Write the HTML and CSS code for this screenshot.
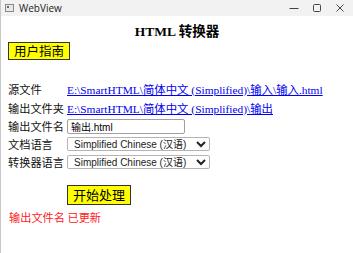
FILE: index.html
```html
<!DOCTYPE html>
<html lang="zh-CN">
<head>
  <meta charset="UTF-8">
  <meta name="viewport" content="width=device-width, initial-scale=1.0">
  <title>WebView</title>
  <link rel="stylesheet" href="styles.css">
</head>
<body>

  <div class="window">
    <!-- Title Bar -->
    <div class="titlebar">
      <span class="app-icon"><span></span></span>
      <span class="app-name">WebView</span>
      <span class="controls">
        <svg width="10" height="10" viewBox="0 0 10 10"><path d="M0.5 5.5h9" stroke="#444" stroke-width="1"/></svg>
        <svg width="10" height="10" viewBox="0 0 10 10"><rect x="1.5" y="1.5" width="7" height="7" rx="1" fill="none" stroke="#444" stroke-width="1"/></svg>
        <svg width="10" height="10" viewBox="0 0 10 10"><path d="M1.5 1.5l7 7M8.5 1.5l-7 7" stroke="#444" stroke-width="1"/></svg>
      </span>
    </div>

    <!-- Page -->
    <div class="page">
      <h1>HTML 转换器</h1>
      <button class="yellow-btn">用户指南</button>

      <div class="form-grid">
        <span class="label">源文件</span>
        <a class="path-link" href="#">E:\SmartHTML\简体中文 (Simplified)\输入\输入.html</a>

        <span class="label">输出文件夹</span>
        <a class="path-link" href="#">E:\SmartHTML\简体中文 (Simplified)\输出</a>

        <span class="label">输出文件名</span>
        <span><input type="text" class="name-input" value="输出.html"></span>

        <span class="label">文档语言</span>
        <span>
          <select class="lang-select">
            <option>Simplified Chinese (汉语)</option>
          </select>
        </span>

        <span class="label">转换器语言</span>
        <span>
          <select class="lang-select">
            <option>Simplified Chinese (汉语)</option>
          </select>
        </span>
      </div>

      <button class="yellow-btn start-btn">开始处理</button>

      <div class="status">输出文件名 已更新</div>
    </div>
  </div>

</body>
</html>
```

FILE: styles.css
```css
/* General Styles */
body {
  margin: 0;
  background-color: #fff;
}

.window {
  width: 353px;
  height: 253px;
  box-sizing: border-box;
  border-left: 1px solid #c8c8c8;
  overflow: hidden;
}

/* Title Bar */
.titlebar {
  height: 16px;
  background-color: #f2f2f2;
  display: flex;
  align-items: center;
  font-family: "Open Sans", "Noto Sans", sans-serif;
  font-size: 10px;
  color: #222;
}

.app-icon {
  width: 7px;
  height: 6px;
  margin-left: 4px;
  margin-right: 5px;
  border: 1px solid #8a8a8a;
  background-color: #e8e8e8;
  display: flex;
}

.app-icon span {
  width: 2px;
  height: 2px;
  margin: 1px;
  background-color: #3a7c8c;
}

.controls {
  margin-left: auto;
  margin-right: 8px;
  display: flex;
  gap: 13px;
}

.controls svg {
  display: block;
}

/* Page */
.page {
  padding: 0 7px;
}

h1 {
  margin: 8px 0 3px;
  text-align: center;
  font-family: "Liberation Serif", "Noto Sans CJK SC", serif;
  font-size: 13.5px;
  line-height: 15px;
  font-weight: bold;
}

.yellow-btn {
  display: block;
  height: 18px;
  padding: 0 5px;
  font-family: "Noto Sans CJK SC", sans-serif;
  font-size: 12.5px;
  line-height: 14px;
  background-color: #ffff00;
  border: 1px solid #333;
  color: #000;
}

.form-grid {
  margin-top: 19px;
  display: grid;
  grid-template-columns: 59px auto;
  grid-template-rows: 19px 19px 18px 18px 17px;
  align-items: center;
}

.label {
  font-family: "Noto Sans CJK SC", sans-serif;
  font-size: 11.2px;
  color: #111;
  white-space: nowrap;
}

.path-link {
  font-family: "Liberation Serif", "Noto Sans CJK SC", serif;
  font-size: 11.4px;
  color: #0000ee;
  white-space: nowrap;
}

.name-input {
  display: block;
  box-sizing: border-box;
  width: 118px;
  height: 15px;
  padding: 0 3px;
  border: 1px solid #a0a0a0;
  border-radius: 2px;
  font-family: "Liberation Sans", "Noto Sans CJK SC", sans-serif;
  font-size: 10px;
}

.lang-select {
  display: block;
  box-sizing: border-box;
  width: 143px;
  height: 14px;
  padding: 0 2px;
  border: 1px solid #b4b4b4;
  border-radius: 2px;
  background-color: #fff;
  color: #222;
  font-family: "Liberation Sans", "Noto Sans CJK SC", sans-serif;
  font-size: 10px;
}

.start-btn {
  margin: 15px 0 0 59px;
  height: 20px;
  font-size: 13px;
}

.status {
  margin-top: 5px;
  font-family: "Noto Sans CJK SC", sans-serif;
  font-size: 11.2px;
  line-height: 14px;
  color: #ff2020;
  padding-left: 1px;
}
```
